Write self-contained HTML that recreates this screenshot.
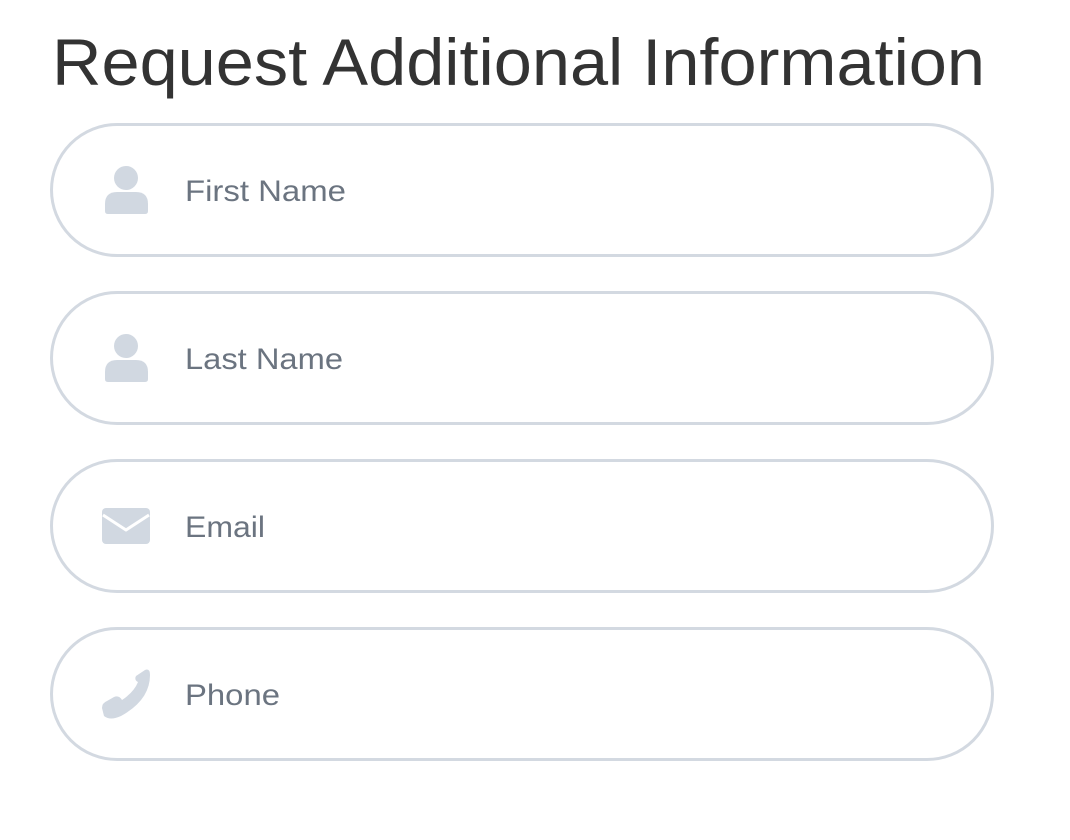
<!DOCTYPE html>
<html><head><meta charset="utf-8"><style>
html,body{margin:0;padding:0;background:#fff;width:1070px;height:840px;overflow:hidden}
svg{display:block}
</style></head><body>
<svg width="1070" height="840" xmlns="http://www.w3.org/2000/svg">
<text x="52" y="85" font-family="Liberation Sans, sans-serif" font-size="66" fill="#333" textLength="933" lengthAdjust="spacingAndGlyphs">Request Additional Information</text>
<g fill="none" stroke="#d3d9e1" stroke-width="3">
<rect x="51.5" y="124.5" width="941" height="131" rx="65.5"/>
<rect x="51.5" y="292.5" width="941" height="131" rx="65.5"/>
<rect x="51.5" y="460.5" width="941" height="131" rx="65.5"/>
<rect x="51.5" y="628.5" width="941" height="131" rx="65.5"/>
</g>
<g fill="#d1d8e1">
<circle cx="126" cy="178" r="12"/>
<path d="M105,211 L105,204 Q105,192 117,192 L136,192 Q148,192 148,204 L148,211 Q148,214 145,214 L108,214 Q105,214 105,211 Z"/>
<circle cx="126" cy="346" r="12"/>
<path d="M105,379 L105,372 Q105,360 117,360 L136,360 Q148,360 148,372 L148,379 Q148,382 145,382 L108,382 Q105,382 105,379 Z"/>
<rect x="102" y="508" width="48" height="36" rx="4"/>
<path d="M136,676 L145,670 Q150,668 150,675 Q150,700 121,716 Q110,721 104,716 L102,708 Q102,703 107,701 L114,697 Q119,695 122,700 Q134,692 138,682 Q134,680 136,676 Z"/>
</g>
<path d="M103,515 L126,530 L149,515" fill="none" stroke="#fff" stroke-width="3" stroke-linejoin="round"/>
<g font-family="Liberation Sans, sans-serif" font-size="30" fill="#6b7480">
<text x="185" y="201" textLength="161" lengthAdjust="spacingAndGlyphs">First Name</text>
<text x="185" y="369" textLength="158" lengthAdjust="spacingAndGlyphs">Last Name</text>
<text x="185" y="537" textLength="80" lengthAdjust="spacingAndGlyphs">Email</text>
<text x="185" y="705" textLength="95" lengthAdjust="spacingAndGlyphs">Phone</text>
</g>
</svg>
</body></html>
